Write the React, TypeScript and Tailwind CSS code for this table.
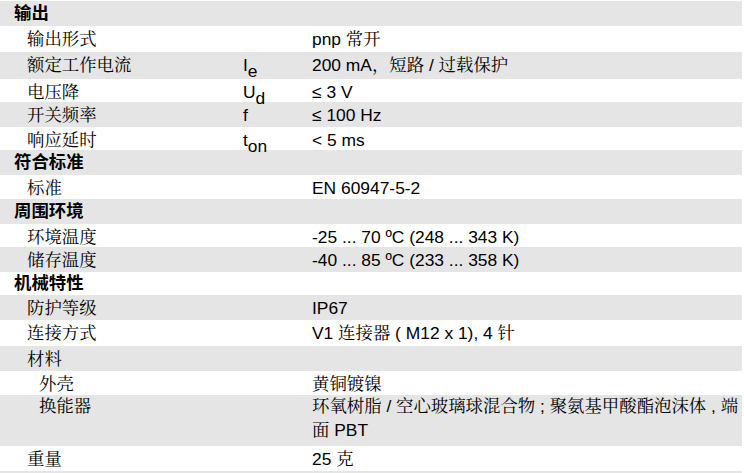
import React from "react";

type Row = {
  kind: "h" | "r";
  label: string;
  indent?: number;
  sym?: [string, string?];
  value?: React.ReactNode;
  h: string;
  top?: boolean;
};

const rows: Row[] = [
  { kind: "h", label: "输出", h: "h-[25px]" },
  { kind: "r", label: "输出形式", value: "pnp 常开", h: "h-[26px]" },
  { kind: "r", label: "额定工作电流", sym: ["I", "e"], value: "200 mA，短路 / 过载保护", h: "h-[27px]" },
  { kind: "r", label: "电压降", sym: ["U", "d"], value: "≤ 3 V", h: "h-[23px]" },
  { kind: "r", label: "开关频率", sym: ["f"], value: "≤ 100 Hz", h: "h-[25px]" },
  { kind: "r", label: "响应延时", sym: ["t", "on"], value: "< 5 ms", h: "h-[23px]" },
  { kind: "h", label: "符合标准", h: "h-[25px]" },
  { kind: "r", label: "标准", value: "EN 60947-5-2", h: "h-[24px]" },
  { kind: "h", label: "周围环境", h: "h-[25px]" },
  { kind: "r", label: "环境温度", value: "-25 ... 70 ºC (248 ... 343 K)", h: "h-[23px]" },
  { kind: "r", label: "储存温度", value: "-40 ... 85 ºC (233 ... 358 K)", h: "h-[25px]" },
  { kind: "h", label: "机械特性", h: "h-[23px]" },
  { kind: "r", label: "防护等级", value: "IP67", h: "h-[25px]" },
  { kind: "r", label: "连接方式", value: "V1 连接器 ( M12 x 1), 4 针", h: "h-[26px]" },
  { kind: "r", label: "材料", h: "h-[25px]" },
  { kind: "r", label: "外壳", indent: 1, value: "黄铜镀镍", h: "h-[24px]" },
  {
    kind: "r",
    label: "换能器",
    indent: 1,
    top: true,
    value: (
      <span className="block whitespace-nowrap">
        环氧树脂 / 空心玻璃球混合物 ; 聚氨基甲酸酯泡沫体 , 端
        <br />
        面 PBT
      </span>
    ),
    h: "h-[51px]",
  },
  { kind: "r", label: "重量", value: "25 克", h: "h-[25px]" },
];

const body =
  "[font-family:'Liberation_Sans','Noto_Serif_CJK_SC','Noto_Sans_CJK_SC',sans-serif]";
const head = "[font-family:'Liberation_Sans','Noto_Sans_CJK_SC',sans-serif]";

export default function App() {
  return (
    <div className={`w-[744px] h-[473px] bg-white pt-[1px] overflow-hidden text-[17.4px] text-black ${body}`}>
      <div className="w-[742px]">
        {rows.map((r, i) => {
          const bg = i % 2 === 0 ? "bg-[#e5e5e5]" : "bg-white";
          if (r.kind === "h") {
            return (
              <div key={i} className={`${r.h} ${bg} flex items-center pl-[14px]`}>
                <span className={`font-bold ${head}`}>{r.label}</span>
              </div>
            );
          }
          return (
            <div
              key={i}
              className={`${r.h} ${bg} grid grid-cols-[243px_69px_1fr] ${
                r.top ? "items-start leading-[23.5px] pt-[0px]" : "items-center"
              }`}
            >
              <div className={r.indent ? "pl-[39px]" : "pl-[27px]"}>{r.label}</div>
              <div className="whitespace-nowrap">
                {r.sym ? (
                  <span>
                    {r.sym[0]}
                    {r.sym[1] ? <span className="relative top-[6px]">{r.sym[1]}</span> : null}
                  </span>
                ) : null}
              </div>
              <div className="whitespace-nowrap">{r.value}</div>
            </div>
          );
        })}
        <div className="h-[2px] bg-[#e5e5e5]" />
      </div>
    </div>
  );
}
